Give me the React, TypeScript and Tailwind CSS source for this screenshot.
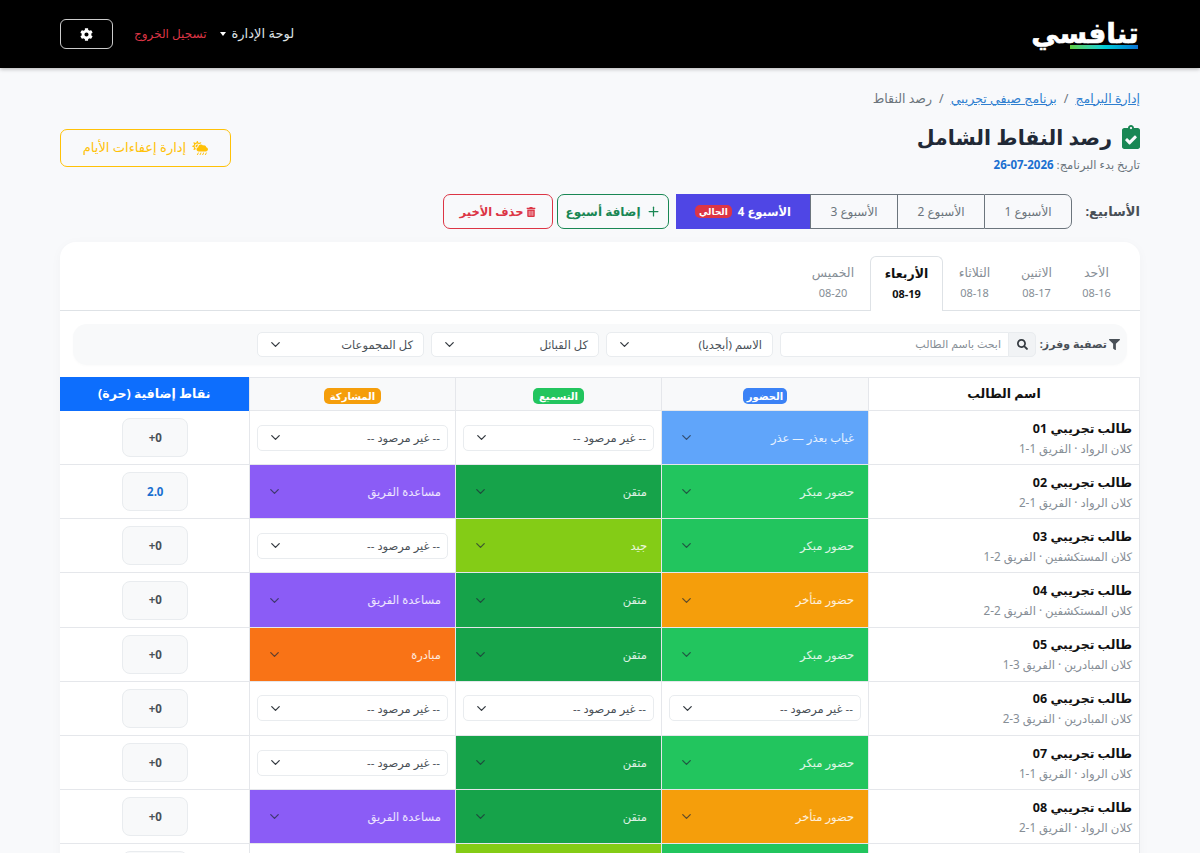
import React from "react";
import { FaClipboardCheck, FaCog, FaCloudSunRain, FaTrashAlt, FaSearch, FaFilter } from "react-icons/fa";
import { Plus, ChevronDown } from "lucide-react";

type Cell = { t: string; c: string } | null;
const A = { early: { t: "حضور مبكر", c: "bg-[#22c55e]" }, late: { t: "حضور متأخر", c: "bg-[#f59e0b]" }, exc: { t: "غياب بعذر — عذر", c: "bg-[#60a5fa]" } };
const L = { top: { t: "متقن", c: "bg-[#16a34a]" }, good: { t: "جيد", c: "bg-[#84cc16]" } };
const P = { help: { t: "مساعدة الفريق", c: "bg-[#8b5cf6]" }, init: { t: "مبادرة", c: "bg-[#f97316]" } };

const rows: { n: string; s: string; a: Cell; l: Cell; p: Cell; x: string }[] = [
  { n: "طالب تجريبي 01", s: "كلان الرواد · الفريق 1-1", a: A.exc, l: null, p: null, x: "+0" },
  { n: "طالب تجريبي 02", s: "كلان الرواد · الفريق 1-2", a: A.early, l: L.top, p: P.help, x: "2.0" },
  { n: "طالب تجريبي 03", s: "كلان المستكشفين · الفريق 2-1", a: A.early, l: L.good, p: null, x: "+0" },
  { n: "طالب تجريبي 04", s: "كلان المستكشفين · الفريق 2-2", a: A.late, l: L.top, p: P.help, x: "+0" },
  { n: "طالب تجريبي 05", s: "كلان المبادرين · الفريق 3-1", a: A.early, l: L.top, p: P.init, x: "+0" },
  { n: "طالب تجريبي 06", s: "كلان المبادرين · الفريق 3-2", a: null, l: null, p: null, x: "+0" },
  { n: "طالب تجريبي 07", s: "كلان الرواد · الفريق 1-1", a: A.early, l: L.top, p: null, x: "+0" },
  { n: "طالب تجريبي 08", s: "كلان الرواد · الفريق 1-2", a: A.late, l: L.top, p: P.help, x: "+0" },
  { n: "طالب تجريبي 09", s: "كلان المستكشفين · الفريق 2-1", a: A.early, l: L.good, p: null, x: "+0" },
];

const days = [
  { d: "الأحد", t: "08-16", w: "w-[59px]" },
  { d: "الاثنين", t: "08-17", w: "w-[61px]" },
  { d: "الثلاثاء", t: "08-18", w: "w-[63px]" },
  { d: "الأربعاء", t: "08-19", w: "w-[73px]", active: true },
  { d: "الخميس", t: "08-20", w: "w-[74px]" },
];

function Sel({ t, w }: { t: string; w: string }) {
  return (
    <div className={`${w} h-[25px] bg-white border border-[#e9ecef] rounded-[5px] flex items-center justify-between pr-[10px] pl-[10px] text-[11.5px] text-[#495057] shrink-0`}>
      <span>{t}</span>
      <ChevronDown size={15} className="text-[#343a40]" />
    </div>
  );
}

function DataCell({ cell }: { cell: Cell }) {
  if (cell) {
    return (
      <td className={`${cell.c} border border-[#e5e7eb] p-0`}>
        <div className="flex items-center justify-between pr-[14px] pl-[17px] text-[11.5px] text-white/85">
          <span>{cell.t}</span>
          <ChevronDown size={15} className="text-[#1f2937]/70" />
        </div>
      </td>
    );
  }
  return (
    <td className="border border-[#e5e7eb] px-[7px] py-0 bg-white">
      <div className="h-[26px] bg-white border border-[#e9ecef] rounded-[5px] flex items-center justify-between pr-[7px] pl-[10px] text-[11.5px] text-[#495057]">
        <span>-- غير مرصود --</span>
        <ChevronDown size={15} className="text-[#343a40]" />
      </div>
    </td>
  );
}

export default function App() {
  return (
    <div dir="rtl" className="h-[853px] overflow-hidden bg-[#f8f9fb] font-['Noto_Sans','DejaVu_Sans',sans-serif] text-[#212529]">
      <nav className="h-[68px] bg-black flex items-center justify-between px-[60px] shadow-[0_1px_4px_rgba(0,0,0,0.3)]">
        <div className="w-[106px] mr-[2px] flex flex-col items-center">
          <span className="text-[28px] leading-[25px] font-black text-white [-webkit-text-stroke:0.6px_white] whitespace-nowrap">تنافسي</span>
          <div className="h-[4px] w-[68px] self-start bg-gradient-to-l from-[#1070d0] via-[#00d0d8] to-[#5fcf3a]" />
        </div>
        <div className="flex items-center">
          <span className="text-[13px] text-[#dee2e6]">لوحة الإدارة</span>
          <span className="mr-[6px] w-0 h-0 border-x-[3.5px] border-x-transparent border-t-[4px] border-t-white" />
          <span className="mr-[13px] text-[12px] text-[#dc3545]">تسجيل الخروج</span>
          <button className="mr-[21px] w-[53px] h-[30px] border border-white/80 rounded-[6px] flex items-center justify-center">
            <FaCog size={13} className="text-white" />
          </button>
        </div>
      </nav>

      <main className="px-[60px]">
        <div className="flex justify-between items-start">
          <div className="pt-[22px]">
            <div className="flex items-center text-[12.5px] h-[18px] gap-[7px]">
              <span className="text-[#2f7fd0] underline">إدارة البرامج</span>
              <span className="text-[#6c757d]">/</span>
              <span className="text-[#2f7fd0] underline">برنامج صيفي تجريبي</span>
              <span className="text-[#6c757d]">/</span>
              <span className="text-[#6c757d]">رصد النقاط</span>
            </div>
            <div className="mt-[15px] flex items-center gap-[7px] h-[28px]">
              <FaClipboardCheck size={24} className="text-[#198754] mr-[-3px]" />
              <h1 className="text-[20.5px] font-bold text-[#212936]">رصد النقاط الشامل</h1>
            </div>
            <div className="mt-[5px] text-[11.5px] text-[#6c757d] h-[16px]">
              تاريخ بدء البرنامج: <b className="text-[#1a6fd0]">2026-07-26</b>
            </div>
          </div>
          <button className="mt-[61px] w-[171px] h-[38px] border border-[#ffc107] rounded-[7px] text-[#ffc107] flex items-center justify-center gap-[6px] text-[13px] font-medium">
            <FaCloudSunRain size={16} />
            <span>إدارة إعفاءات الأيام</span>
          </button>
        </div>

        <div className="mt-[22px] flex items-center h-[35px]">
          <span className="w-[68px] text-[13px] font-bold text-[#495057]">الأسابيع:</span>
          <div className="flex h-[35px] text-[12px] text-[#6c757d]">
            <div className="w-[88px] border border-[#6c757d] rounded-r-[7px] flex items-center justify-center">الأسبوع 1</div>
            <div className="w-[87px] border-y border-l border-[#6c757d] flex items-center justify-center">الأسبوع 2</div>
            <div className="w-[87px] border-y border-l border-[#6c757d] flex items-center justify-center">الأسبوع 3</div>
            <div className="w-[134px] bg-[#4f46e5] text-white text-[11.5px] font-bold flex items-center justify-center gap-[6px]">
              <span>الأسبوع 4</span>
              <span className="bg-[#dc3545] rounded-[5px] px-[4px] text-[9px] leading-[13px] h-[13px]">الحالي</span>
            </div>
          </div>
          <button className="mr-[7px] w-[112px] h-[35px] border border-[#198754] rounded-[7px] text-[#198754] flex items-center justify-center gap-[5px] text-[12px] font-bold">
            <Plus size={15} />
            <span>إضافة أسبوع</span>
          </button>
          <button className="mr-[4px] w-[110px] h-[35px] border border-[#dc3545] rounded-[7px] text-[#dc3545] flex items-center justify-center gap-[3px] text-[11.5px] font-bold">
            <FaTrashAlt size={10} />
            <span>حذف الأخير</span>
          </button>
        </div>

        <section className="mt-[13px] bg-white rounded-t-[16px] shadow-[0_2px_12px_rgba(0,0,0,0.03)]">
          <div className="h-[69px] pt-[14px] pr-[14px] border-b border-[#dee2e6] flex items-end">
            {days.map((d) => (
              <div key={d.d} className={`${d.w} h-[55px] flex flex-col items-center justify-center ${d.active ? "bg-white border border-b-0 border-[#dee2e6] rounded-t-[6px] text-[#111] font-bold mb-[-1px]" : "text-[#868e96]"}`}>
                <span className="text-[12.5px] leading-[20px]">{d.d}</span>
                <span className="text-[11px] leading-[20px]">{d.t}</span>
              </div>
            ))}
          </div>
          <div className="px-[13px] pt-[13px] pb-[12px]">
            <div className="h-[41px] bg-[#f8f9fa] rounded-[14px] flex items-center pr-[7px] shadow-[0_1px_3px_rgba(0,0,0,0.02)]">
              <div className="w-[84px] shrink-0 flex items-center gap-[2px] text-[11px] font-bold text-[#495057] whitespace-nowrap">
                <FaFilter size={11} />
                <span>تصفية وفرز:</span>
              </div>
              <div className="w-[256px] h-[25px] flex shrink-0">
                <div className="w-[28px] bg-[#f1f3f5] border border-[#e9ecef] rounded-r-[5px] flex items-center justify-center">
                  <FaSearch size={11} className="text-[#343a40]" />
                </div>
                <div className="flex-1 bg-white border border-r-0 border-[#e9ecef] rounded-l-[5px] flex items-center pr-[7px] text-[11px] text-[#868e96]">ابحث باسم الطالب</div>
              </div>
              <div className="mr-[7px] flex gap-[7px]">
                <Sel t="الاسم (أبجديا)" w="w-[167px]" />
                <Sel t="كل القبائل" w="w-[168px]" />
                <Sel t="كل المجموعات" w="w-[167px]" />
              </div>
            </div>
          </div>

          <table className="w-full table-fixed border-collapse">
            <colgroup>
              <col className="w-[271px]" />
              <col className="w-[207px]" />
              <col className="w-[206px]" />
              <col className="w-[206px]" />
              <col className="w-[190px]" />
            </colgroup>
            <thead>
              <tr className="h-[33px]">
                <th className="border border-[#e5e7eb] bg-white text-[12.5px] font-bold text-[#111] p-0">اسم الطالب</th>
                <th className="border border-[#e5e7eb] bg-[#f8f9fa] p-0">
                  <span className="inline-block bg-[#3b82f6] text-white rounded-[5px] px-[4px] text-[10px] font-bold leading-[16px]">الحضور</span>
                </th>
                <th className="border border-[#e5e7eb] bg-[#f8f9fa] p-0">
                  <span className="inline-block bg-[#22c55e] text-white rounded-[5px] px-[6px] text-[10px] font-bold leading-[16px]">التسميع</span>
                </th>
                <th className="border border-[#e5e7eb] bg-[#f8f9fa] p-0">
                  <span className="inline-block bg-[#f59e0b] text-white rounded-[5px] px-[6px] text-[10px] font-bold leading-[16px]">المشاركة</span>
                </th>
                <th className="border border-l-0 border-[#0d6efd] bg-[#0d6efd] text-white text-[12.5px] font-bold p-0">نقاط إضافية (حرة)</th>
              </tr>
            </thead>
            <tbody>
              {rows.map((r) => (
                <tr key={r.n} className="h-[54.17px]">
                  <td className="border border-[#e5e7eb] bg-white pr-[7px] py-0 text-right">
                    <div className="text-[12.5px] font-bold text-[#111] leading-[20px]">{r.n}</div>
                    <div className="text-[11.7px] text-[#868e96] leading-[18px]">{r.s}</div>
                  </td>
                  <DataCell cell={r.a} />
                  <DataCell cell={r.l} />
                  <DataCell cell={r.p} />
                  <td className="border border-l-0 border-[#e5e7eb] bg-white p-0 pl-[2px]">
                    <div className={`mx-auto w-[66px] h-[39px] bg-[#f8f9fa] border border-[#e9ecef] rounded-[8px] flex items-center justify-center text-[11.5px] font-bold ${r.x === "2.0" ? "text-[#1a6fd0]" : "text-[#495057]"}`}>
                      <span dir="ltr">{r.x}</span>
                    </div>
                  </td>
                </tr>
              ))}
            </tbody>
          </table>
        </section>
      </main>
    </div>
  );
}
